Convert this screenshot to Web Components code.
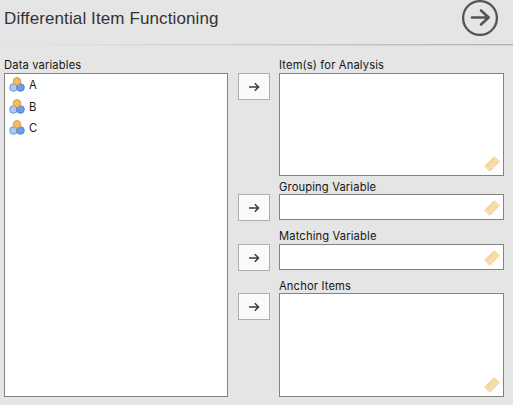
<!DOCTYPE html>
<html lang="en"><head><meta charset="utf-8"><title>Differential Item Functioning</title>
<style>html,body{margin:0;background:#e5e5e5;overflow:hidden}</style></head>
<body>
<analysis-form></analysis-form>
<script>
const define = (name, html) => customElements.define(name, class extends HTMLElement {
  constructor() {
    super();
    const t = document.createElement('template');
    t.innerHTML = html;
    this.attachShadow({mode: 'open'}).append(t.content.cloneNode(true));
  }
});

define('form-header', `<style>
:host{display:flex;box-sizing:border-box;height:46px;padding:0 15px 0 4px;justify-content:space-between;align-items:flex-start;
background:linear-gradient(90deg,#e5e5e5,#b2b2b2) 0 44px/100% 1px no-repeat,linear-gradient(90deg,#e5e5e5,#d2d2d2) 0 45px/100% 1px no-repeat}
h1{margin:9px 0 0;font:400 17px/20px "Liberation Sans",Arial,sans-serif;letter-spacing:.11px;color:#333;white-space:nowrap}
svg{display:block}
</style><h1><slot></slot></h1>
<svg width="36" height="36" viewBox="0 0 36 36" fill="none" stroke="#555"><circle cx="18" cy="18" r="16.9" stroke-width="2.3"/><path d="M10 17.5H26.5M19 10.5L26.7 17.5L19 24.5" stroke-width="2.6" stroke-linecap="round" stroke-linejoin="round"/></svg>`);

define('move-button', `<style>
:host{display:flex;box-sizing:border-box;width:32px;height:27px;border:1px solid #adadad;background:#fafafa;align-items:center;justify-content:center}
svg{display:block}
</style><svg width="12" height="11" viewBox="0 0 12 11" fill="none" stroke="#3b3b3b" stroke-width="1.45"><path d="M1 6H10.5M6.8 2.2L10.6 6L6.8 9.8"/></svg>`);

define('scale-icon', `<style>:host{display:block;width:16px;height:16px}svg{display:block}</style>
<svg width="16" height="16" viewBox="0 0 16 16"><path d="M.7 10.2L10.1.7L15.4 5.6L5.9 15.3Z" fill="#f8dcaa" stroke="#f3d29c" stroke-width="1" stroke-linejoin="round"/><path d="M2.8 8.5l1.8 1.7M4.7 6.6l1.3 1.3M6.6 4.7l1.8 1.7M8.5 2.8l1.3 1.3" stroke="#e6bf82" stroke-width=".9"/></svg>`);

define('nominal-icon', `<style>:host{display:block;width:16px;height:16px}svg{display:block}</style>
<svg width="16" height="16" viewBox="0 0 16 16"><circle cx="4.5" cy="10.5" r="3.8" fill="#acc9f4" stroke="#6497e3"/><circle cx="11.5" cy="10.5" r="3.8" fill="#6b9de9" stroke="#4b84dc"/><circle cx="8" cy="4.4" r="3.8" fill="#f0bc65" stroke="#d79b3c"/></svg>`);

define('variable-row', `<style>
:host{display:flex;align-items:center;gap:4px;height:21.5px;padding-left:4px}
</style><nominal-icon></nominal-icon><span><slot></slot></span>`);

define('variable-field', `<style>
:host{display:flex;flex-direction:column;min-width:0}
.label{height:16px;line-height:16px;white-space:nowrap}
.label ::slotted(*){display:block;margin-top:var(--label-shift,0)}
.box{flex:1;box-sizing:border-box;border:1px solid #828282;background:#fff;display:flex;flex-direction:column}
.foot{margin:auto 3px 3px auto}
</style><div class="label"><slot name="label"></slot></div><div class="box"><slot></slot><div class="foot"><slot name="icon"></slot></div></div>`);

define('target-row', `<style>
:host{display:flex;gap:9px}
move-button{margin-top:16px;flex:none}
variable-field{flex:1}
</style><move-button></move-button><variable-field><span slot="label"><slot></slot></span><scale-icon slot="icon"></scale-icon></variable-field>`);

define('analysis-form', `<style>
:host{display:block;width:513px;height:405px;background:#e5e5e5;color:#161616;font:11.2px/16px Inter,"Liberation Sans",sans-serif;letter-spacing:.14px}
main{display:grid;grid-template-columns:224px 266px;column-gap:10px;padding:11px 9px 0 4px;height:340px}
variable-row:first-of-type{margin-top:.6px}
.targets{display:grid;grid-template-rows:119px 44px 50px 127px;align-content:start}
.targets target-row:nth-child(2){margin-top:2px}
.targets target-row:nth-child(3){margin-top:8px}
.targets target-row:nth-child(4){margin-top:7px}
.targets target-row:nth-child(n+2){--label-shift:1px}
.targets target-row:nth-child(3){--label-shift:0px}
</style>
<form-header>Differential Item Functioning</form-header>
<main><variable-field><span slot="label">Data variables</span><variable-row>A</variable-row><variable-row>B</variable-row><variable-row>C</variable-row></variable-field>
<div class="targets"><target-row>Item(s) for Analysis</target-row><target-row>Grouping Variable</target-row><target-row>Matching Variable</target-row><target-row>Anchor Items</target-row></div></main>`);
</script></body></html>
